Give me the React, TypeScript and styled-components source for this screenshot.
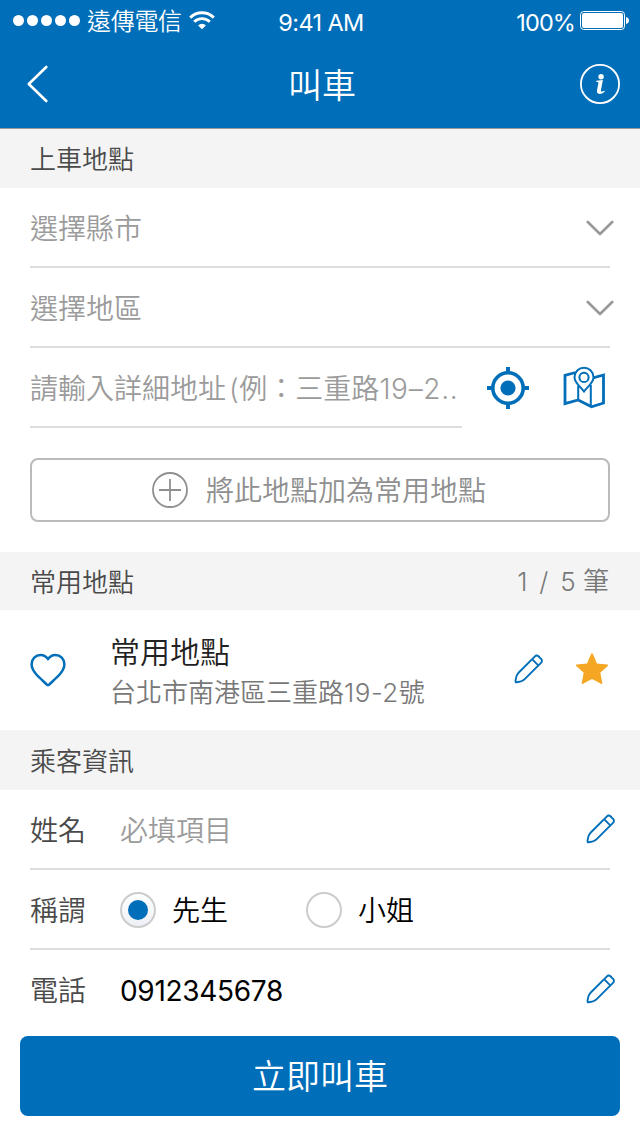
import React from 'react';
import styled, { createGlobalStyle } from 'styled-components';

const BLUE = '#006eb9';

const GlobalStyle = createGlobalStyle`
  *, *::before, *::after { box-sizing: border-box; }
  body {
    margin: 0;
    background: #fff;
    font-family: Inter, 'Noto Sans CJK TC', sans-serif;
    font-weight: 350;
  }
  button { font: inherit; color: inherit; background: none; border: 0; padding: 0; margin: 0; }
  svg { display: block; flex: none; }
`;

const Screen = styled.div`
  display: flex;
  flex-direction: column;
  width: 640px;
  height: 1136px;
  background: #fff;
  overflow: hidden;
`;

const Header = styled.header`
  height: 129px;
  flex: none;
  background: ${BLUE};
  border-bottom: 1px solid #9a9a9c;
  color: #fff;
`;

const StatusBar = styled.div`
  display: grid;
  grid-template-columns: 1fr auto 1fr;
  align-items: center;
  height: 40px;
  padding: 0 11px 0 13px;
`;

const StatusGroup = styled.div<{ $end?: boolean }>`
  display: flex;
  align-items: center;
  justify-content: ${(p) => (p.$end ? 'flex-end' : 'flex-start')};
`;

const Label = styled.span<{
  $size: number;
  $color?: string;
  $weight?: number;
  $spacing?: number;
  $drop?: number;
}>`
  padding-top: ${(p) => p.$drop ?? 3}px;
  font-size: ${(p) => p.$size}px;
  line-height: ${(p) => Math.round(p.$size * 1.4)}px;
  color: ${(p) => p.$color ?? 'inherit'};
  font-weight: ${(p) => p.$weight ?? 350};
  letter-spacing: ${(p) => p.$spacing ?? 0}px;
  white-space: nowrap;
`;

const Carrier = styled(Label)`
  margin: 0 7px 0 6px;
`;

const Percent = styled(Label)`
  margin-right: 5px;
`;

const Latin = styled.span<{ $spacing: number }>`
  letter-spacing: ${(p) => p.$spacing}px;
`;

const Paren = styled.span`
  margin: 0 0.6px 0 3px;
`;

const NavBar = styled.nav`
  display: grid;
  grid-template-columns: 1fr auto 1fr;
  align-items: center;
  height: 88px;
  padding: 0 20px 0 26px;
`;

const InfoButton = styled.button`
  justify-self: end;
`;

const NavTitle = styled(Label)`
  margin: 0 2px 0 0;
`;

const SectionHeader = styled.h2<{ $height: number }>`
  display: flex;
  align-items: center;
  justify-content: space-between;
  flex: none;
  height: ${(p) => p.$height}px;
  margin: 0;
  padding: 0 31px 0 30px;
  background: #f4f4f4;
`;

const Form = styled.section`
  padding: 0 30px;
`;

const Row = styled.div<{ $line?: boolean }>`
  display: flex;
  align-items: center;
  height: 80px;
  padding-top: 2px;
  border-bottom: 2px solid ${(p) => (p.$line === false ? 'transparent' : '#dedede')};
`;

const SelectRow = styled(Row)`
  justify-content: space-between;

  svg { margin-right: -4px; }
`;

const AddressRow = styled.div`
  display: flex;
  align-items: center;

  ${Row} { width: 432px; }
`;

const AddressActions = styled.div`
  display: flex;
  align-items: center;
  gap: 33px;
  margin-left: 25px;
`;

const AddButton = styled.button`
  display: flex;
  align-items: center;
  justify-content: center;
  gap: 18px;
  width: 100%;
  height: 64px;
  margin: 30px 0;
  padding-right: 2px;
  border: 2px solid #bbb;
  border-radius: 8px;
`;

const Favorite = styled.article`
  display: flex;
  align-items: center;
  flex: none;
  height: 120px;
  padding: 0 31px 0 30px;
`;

const FavoriteText = styled.div`
  display: flex;
  flex-direction: column;
  flex: 1;
  margin-left: 44px;
`;

const FavoriteActions = styled.div`
  display: flex;
  align-items: center;
  gap: 31px;
  padding-bottom: 2px;
`;

const FieldRow = styled(Row)`
  svg { margin: -2px -6px 0 auto; }
`;

const FieldName = styled(Label)`
  width: 90px;
`;

const Option = styled.label<{ $width?: number }>`
  display: flex;
  align-items: center;
  gap: 16px;
  width: ${(p) => (p.$width ? `${p.$width}px` : 'auto')};
`;

const Radio = styled.span<{ $checked?: boolean }>`
  display: grid;
  place-items: center;
  width: 36px;
  height: 36px;
  border: 2px solid #ccc;
  border-radius: 50%;
  background: ${(p) => (p.$checked ? 'linear-gradient(#fff, #edf0f5)' : '#fff')};

  &::after {
    content: '';
    width: 20px;
    height: 20px;
    border-radius: 50%;
    background: ${(p) => (p.$checked ? BLUE : 'transparent')};
  }
`;

const SubmitButton = styled.button`
  display: flex;
  align-items: center;
  justify-content: center;
  flex: none;
  height: 80px;
  margin: 6px 20px 20px;
  border-radius: 8px;
  background: ${BLUE};
  color: #fff;
`;

const SignalDots = () => (
  <svg width="68" height="12" viewBox="0 0 68 12" fill="#fff">
    {[5.5, 19.5, 33.5, 47.5, 61.5].map((x) => (
      <circle key={x} cx={x} cy="6.5" r="5.5" />
    ))}
  </svg>
);

const WifiIcon = () => (
  <svg width="26" height="19" viewBox="0 0 26 19" fill="none" stroke="#fff" strokeWidth="2.9">
    <path d="M1.2 6.6a16.8 16.8 0 0 1 23.6 0" />
    <path d="M5.2 10.8a11.1 11.1 0 0 1 15.6 0" />
    <path d="M13 18.3l-3.9-3.9a5.6 5.6 0 0 1 7.8 0z" fill="#fff" stroke="none" />
  </svg>
);

const BatteryIcon = () => (
  <svg width="49" height="19" viewBox="0 0 49 19">
    <rect x="0.5" y="0.5" width="44" height="18" rx="3.2" fill="none" stroke="#fff" />
    <rect x="2" y="2" width="41" height="15" rx="2" fill="#fff" />
    <path d="M46 6c1.8.6 3 1.8 3 3.5s-1.2 2.9-3 3.5z" fill="#fff" />
  </svg>
);

const BackIcon = () => (
  <svg width="24" height="40" viewBox="0 0 24 40" fill="none" stroke="#fff" strokeWidth="2.6" strokeLinecap="round" strokeLinejoin="round">
    <path d="M20.3 3L2.8 20l17.5 17" />
  </svg>
);

const InfoIcon = () => (
  <svg width="40" height="40" viewBox="0 0 40 40">
    <circle cx="20" cy="20" r="19.1" fill="none" stroke="#fff" strokeWidth="1.8" />
    <circle cx="21.1" cy="12.7" r="2.7" fill="#fff" />
    <path d="M16.3 16.7l6.6-.8-2 10.4c-.2 1.2.4 1.5 1.3 1.2l2.3-.8.3.9c-1.4 1.5-3.3 2.3-5.2 2.3-2.2 0-3-1.3-2.6-3.3l1.4-7.5c.1-.8-.2-1-.8-1.1l-1.5-.2z" fill="#fff" />
  </svg>
);

const ChevronDown = () => (
  <svg width="28" height="18" viewBox="0 0 28 18" fill="none" stroke="#999" strokeWidth="2.6" strokeLinecap="round" strokeLinejoin="round">
    <path d="M1.8 3L14 15 26.2 3" />
  </svg>
);

const TargetIcon = () => (
  <svg width="42" height="42" viewBox="0 0 42 42" fill="none" stroke={BLUE} strokeWidth="4">
    <circle cx="21" cy="21" r="15.2" strokeWidth="3.6" />
    <circle cx="21" cy="21" r="7.6" fill={BLUE} stroke="none" />
    <path d="M21 0v5M21 37v5M0 21h5M37 21h5" />
  </svg>
);

const MapIcon = () => (
  <svg width="44" height="44" viewBox="0 0 44 44" fill="none" stroke={BLUE}>
    <path d="M13.500 6.500L3 9.300v28.400L16.200 34l13.300 6.800L41.500 37V9L31 11.800" strokeWidth="2.800" />
    <path d="M16.200 20v14M28.800 19v21" strokeWidth="2" />
    <path d="M22 25.500C18.500 20.600 12.500 17 12.500 11.200a9.500 9.500 0 0 1 19 0c0 5.800-6 9.400-9.500 14.300z" fill="#fff" strokeWidth="2" />
    <circle cx="22" cy="11.400" r="4.600" fill="#fff" strokeWidth="2" />
  </svg>
);

const PlusCircle = () => (
  <svg width="36" height="36" viewBox="0 0 36 36" fill="none" stroke="#8f8f8f" strokeWidth="1.8">
    <circle cx="18" cy="18" r="17" />
    <path d="M7 18h22M18 7v22" />
  </svg>
);

const HeartIcon = () => (
  <svg width="36" height="34" viewBox="0 0 36 34" fill="none" stroke={BLUE} strokeWidth="2.5" strokeLinejoin="round">
    <path d="M18 6.200C16.200 3.300 13.600 2 10.600 2 5.600 2 1.600 6 1.600 11.300c0 3.600 1.600 6.500 4.400 9.700 3.300 3.800 7.400 7.200 10.800 10.500.8.700 1.600.7 2.400 0C22.600 28.200 26.700 24.800 30 21c2.800-3.200 4.400-6.100 4.400-9.700C34.400 6 30.400 2 25.400 2c-3 0-5.600 1.300-7.400 4.200z" />
  </svg>
);

const PencilIcon = () => (
  <svg width="30" height="30" viewBox="0 0 30 30" fill="none" stroke={BLUE} strokeWidth="1.9" strokeLinejoin="round">
    <path d="M20.700 2.600c1.200-1.200 2.800-1.200 4-.1l2.300 2.300c1.300 1.200 1.200 2.800 0 4L10.700 25.100c-1.600 1.600-5.300 2.900-8 3.200-.9.100-1.300-.3-1.200-1.200.3-2.700 1.200-6.200 2.800-8.100z" />
    <path d="M18.300 5.400l6 6" />
  </svg>
);

const StarIcon = () => (
  <svg width="34" height="32" viewBox="0 0 34 32" fill="#f5a623">
    <path d="M17 .3c.5 0 .7.300.9.800l4.100 9.300 10.200 1.100c1 .1 1.200.8.500 1.500l-7.400 6.700 2 10.200c.2 1-.4 1.400-1.200.9L17 26l-9.100 4.800c-.8.500-1.400.1-1.200-.9l2-10.200-7.400-6.700c-.7-.7-.5-1.400.5-1.500l10.200-1.100 4.100-9.300c.2-.5.4-.8.9-.8z" />
  </svg>
);

export default function App() {
  return (
    <Screen>
      <GlobalStyle />
      <Header>
        <StatusBar>
          <StatusGroup>
            <SignalDots />
            <Carrier $size={24} $spacing={-0.3}>遠傳電信</Carrier>
            <WifiIcon />
          </StatusGroup>
          <Label $size={23.5} $spacing={-0.6} $weight={380} $drop={4}>9:41 AM</Label>
          <StatusGroup $end>
            <Percent $size={23.5} $spacing={-0.9} $weight={380} $drop={4}>100%</Percent>
            <BatteryIcon />
          </StatusGroup>
        </StatusBar>
        <NavBar>
          <button aria-label="返回"><BackIcon /></button>
          <NavTitle as="h1" $size={34} $drop={3}>叫車</NavTitle>
          <InfoButton aria-label="說明"><InfoIcon /></InfoButton>
        </NavBar>
      </Header>

      <SectionHeader $height={59}>
        <Label $size={26} $color="#4a4a4a">上車地點</Label>
      </SectionHeader>
      <Form>
        <SelectRow>
          <Label $size={28} $color="#9b9b9b">選擇縣市</Label>
          <ChevronDown />
        </SelectRow>
        <SelectRow>
          <Label $size={28} $color="#9b9b9b">選擇地區</Label>
          <ChevronDown />
        </SelectRow>
        <AddressRow>
          <Row>
            <Label $size={28} $color="#9b9b9b">
              請輸入詳細地址<Paren>(</Paren>例：三重路<Latin $spacing={0.7}>19–2..</Latin>
            </Label>
          </Row>
          <AddressActions>
            <TargetIcon />
            <MapIcon />
          </AddressActions>
        </AddressRow>
        <AddButton>
          <PlusCircle />
          <Label $size={28} $color="#8f8f8f">將此地點加為常用地點</Label>
        </AddButton>
      </Form>

      <SectionHeader $height={58}>
        <Label $size={26} $color="#4a4a4a">常用地點</Label>
        <Label $size={26} $color="#787878" $drop={1}>
          <Latin $spacing={2.25}>1 / </Latin>5 筆
        </Label>
      </SectionHeader>
      <Favorite>
        <HeartIcon />
        <FavoriteText>
          <Label $size={30} $color="#222" $drop={2}>常用地點</Label>
          <Label $size={26} $color="#787878" $drop={2}>
            台北市南港區三重路<Latin $spacing={0.5}>19-2</Latin>號
          </Label>
        </FavoriteText>
        <FavoriteActions>
          <PencilIcon />
          <StarIcon />
        </FavoriteActions>
      </Favorite>

      <SectionHeader $height={60}>
        <Label $size={26} $color="#4a4a4a">乘客資訊</Label>
      </SectionHeader>
      <Form>
        <FieldRow>
          <FieldName $size={28} $color="#4a4a4a">姓名</FieldName>
          <Label $size={28} $color="#9b9b9b">必填項目</Label>
          <PencilIcon />
        </FieldRow>
        <FieldRow>
          <FieldName $size={28} $color="#4a4a4a">稱謂</FieldName>
          <Option $width={186}>
            <Radio $checked />
            <Label $size={28} $color="#000">先生</Label>
          </Option>
          <Option>
            <Radio />
            <Label $size={28} $color="#000">小姐</Label>
          </Option>
        </FieldRow>
        <FieldRow $line={false}>
          <FieldName $size={28} $color="#4a4a4a">電話</FieldName>
          <Label $size={28} $color="#000" $weight={380} $spacing={-0.3}>0912345678</Label>
          <PencilIcon />
        </FieldRow>
      </Form>
      <SubmitButton>
        <Label $size={34} $drop={2}>立即叫車</Label>
      </SubmitButton>
    </Screen>
  );
}
